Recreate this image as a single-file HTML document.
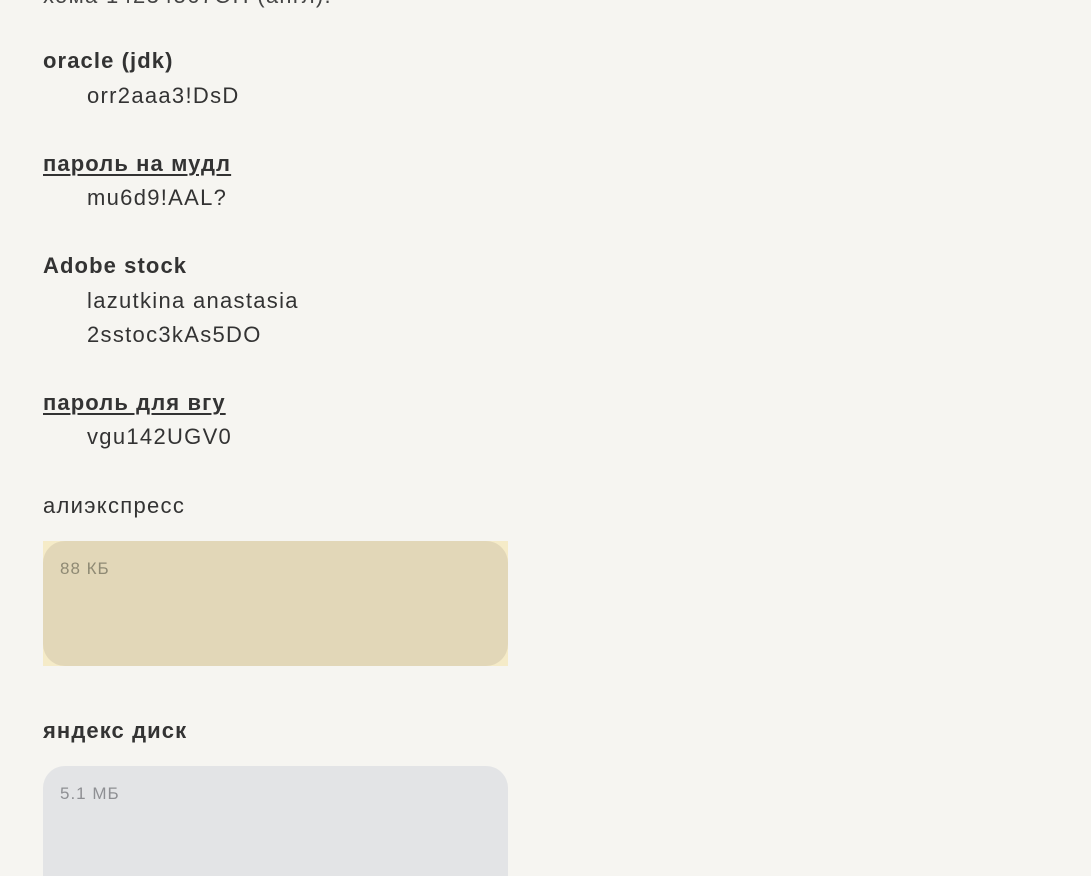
<!DOCTYPE html>
<html><head><meta charset="utf-8"><style>
body{margin:0;width:1091px;height:866px;overflow:hidden;background:#f6f5f1;font-family:"Liberation Sans","DejaVu Sans",sans-serif;color:#2b2b2b;position:relative}
.t{position:absolute;font-size:22px;line-height:30px;white-space:nowrap;letter-spacing:1.3px}
.b{font-weight:bold;color:#333;letter-spacing:1.1px}
.u{text-decoration:underline;text-decoration-thickness:2px;text-underline-offset:3px}
.i{left:87px;color:#333}
.h{left:43px}
.box{position:absolute;left:43px;width:465px;height:125px}
.in{position:absolute;inset:0;border-radius:22px}
.sz{position:absolute;left:17px;top:18px;font-size:17px;color:#8f8a74;letter-spacing:1px}
</style></head><body>
<div class="t h" style="top:-19px;color:#444">хома 14234567ОН (англ).</div>
<div class="t h b" style="top:46px">oracle (jdk)</div>
<div class="t i" style="top:81px">orr2aaa3!DsD</div>
<div class="t h b u" style="top:149px">пароль на мудл</div>
<div class="t i" style="top:183px">mu6d9!AAL?</div>
<div class="t h b" style="top:251px">Adobe stock</div>
<div class="t i" style="top:286px">lazutkina anastasia</div>
<div class="t i" style="top:320px">2sstoc3kAs5DO</div>
<div class="t h b u" style="top:388px">пароль для вгу</div>
<div class="t i" style="top:422px">vgu142UGV0</div>
<div class="t h" style="top:491px;color:#333">алиэкспресс</div>
<div class="box" style="top:541px;background:#f5ebc8"><div class="in" style="background:#e2d7b8"></div><div class="sz">88 КБ</div></div>
<div class="t h b" style="top:716px">яндекс диск</div>
<div class="box" style="top:766px;height:110px"><div class="in" style="background:#e3e4e6;border-bottom-left-radius:0;border-bottom-right-radius:0"></div><div class="sz" style="color:#8e8f93">5.1 МБ</div></div>
</body></html>
